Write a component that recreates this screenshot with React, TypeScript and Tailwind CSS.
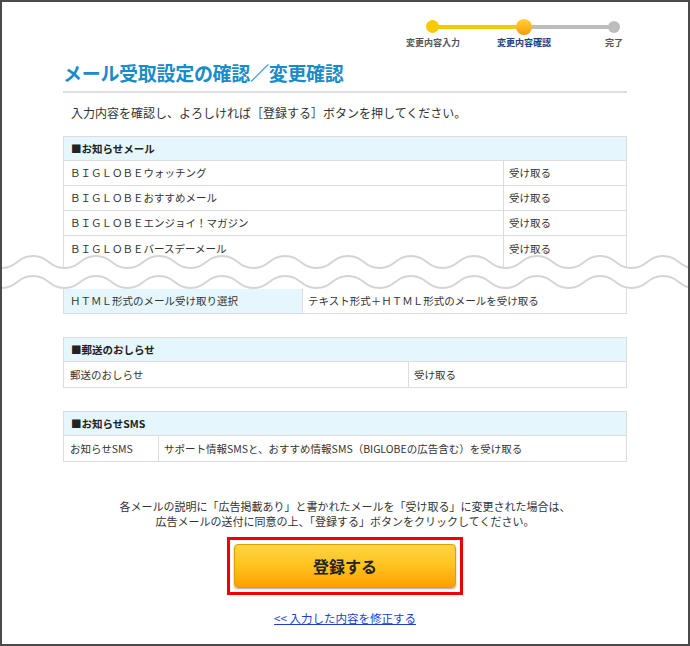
import React from "react";

const font = { fontFamily: '"Noto Sans CJK JP", "Noto Sans", sans-serif' };

function Steps() {
  return (
    <div className="relative ml-auto mr-[47px] h-[50px] w-[240px]">
      <div className="absolute left-[32px] top-[23px] h-[4px] w-[91px] bg-[#f7c900]" />
      <div className="absolute left-[123px] top-[23px] h-[4px] w-[91px] bg-[#bdbdbd]" />
      <div className="absolute left-[25px] top-[18px] h-[13px] w-[13px] rounded-full bg-[#f7c900]" />
      <div className="absolute left-[115px] top-[17px] h-[16px] w-[16px] rounded-full bg-gradient-to-b from-[#ffd23a] to-[#f59b00]" />
      <div className="absolute left-[207px] top-[19px] h-[12px] w-[12px] rounded-full bg-[#bdbdbd]" />
      <div className="absolute left-[2px] top-[34px] w-[60px] text-center text-[9px] font-bold leading-[14px] text-[#555]">変更内容入力</div>
      <div className="absolute left-[93px] top-[34px] w-[60px] text-center text-[9px] font-bold leading-[14px] text-[#1f3e7a]">変更内容確認</div>
      <div className="absolute left-[193px] top-[34px] w-[40px] text-center text-[9px] font-bold leading-[14px] text-[#555]">完了</div>
    </div>
  );
}

function Header({ children }: { children: React.ReactNode }) {
  return (
    <div className="flex h-[24px] items-center border-b border-[#dcdcdc] bg-[#e5f6fd] px-[7px] text-[10.5px] font-bold text-[#222]">
      {children}
    </div>
  );
}

function Row({ left, right, split, noBottom }: { left: string; right: string; split: number; noBottom?: boolean }) {
  return (
    <div className={`flex h-[25px] items-center text-[10.5px] text-[#333] ${noBottom ? "" : "border-b border-[#dcdcdc]"}`}>
      <div className="flex h-full items-center border-r border-[#dcdcdc] px-[6px]" style={{ width: split }}>
        {left}
      </div>
      <div className="flex h-full flex-1 items-center px-[5px]">{right}</div>
    </div>
  );
}

// two wavy cut lines between the mail table and the HTML row
function Waves() {
  const w = 690;
  const len = 63;
  const mk = (y: number) => {
    const x0 = -61.5;
    let d = `M ${x0} ${y}`;
    for (let x = x0; x < w + 40; x += len) {
      d += ` C ${x + len * 0.25} ${y}, ${x + len * 0.25} ${y - 12}, ${x + len / 2} ${y - 12} S ${x + len * 0.75} ${y}, ${x + len} ${y}`;
    }
    return d;
  };
  const top = mk(16);
  const bottom = mk(36);
  return (
    <svg width={w} height={37} className="-mx-[63px] block" viewBox={`0 0 ${w} 37`}>
      <path d={`${top} L ${w + 80} 40 L -70 40 Z`} fill="#fff" />
      <path d={top} fill="none" stroke="#d4d4d4" strokeWidth={2} />
      <path d={bottom} fill="none" stroke="#d4d4d4" strokeWidth={2} />
    </svg>
  );
}

export default function App() {
  return (
    <div style={font} className="h-[646px] w-[690px] overflow-hidden border-2 border-[#4a4a4a] bg-white">
      <Steps />
      <div className="px-[61px]">
        <h1 className="mt-[7px] text-[19px] font-bold leading-[28px] tracking-[-0.3px] text-[#1a8bc9]">
          メール受取設定の確認／変更確認
        </h1>
        <div className="mt-[4px] h-[2px] bg-[#dedede]" />
        <p className="mt-[12px] pl-[8px] text-[12px] leading-[16px] text-[#333]">
          入力内容を確認し、よろしければ［登録する］ボタンを押してください。
        </p>

        {/* お知らせメール */}
        <div className="mt-[15px] border-x border-t border-[#dcdcdc]">
          <Header>■お知らせメール</Header>
          <Row split={440} left="ＢＩＧＬＯＢＥウォッチング" right="受け取る" />
          <Row split={440} left="ＢＩＧＬＯＢＥおすすめメール" right="受け取る" />
          <Row split={440} left="ＢＩＧＬＯＢＥエンジョイ！マガジン" right="受け取る" />
          <Row split={440} left="ＢＩＧＬＯＢＥバースデーメール" right="受け取る" noBottom />
          <div className="flex h-[8px]">
            <div className="w-[440px] border-r border-[#dcdcdc]" />
          </div>
        </div>
        <div className="-mt-[17px]">
          <Waves />
        </div>

        {/* HTML */}
        <div className="flex h-[25px] border-x border-b border-[#dcdcdc] text-[10.5px] text-[#333]">
          <div className="flex w-[239px] items-center border-r border-[#dcdcdc] bg-[#e5f6fd] px-[6px]">ＨＴＭＬ形式のメール受け取り選択</div>
          <div className="flex flex-1 items-center px-[5px]">テキスト形式＋ＨＴＭＬ形式のメールを受け取る</div>
        </div>

        {/* 郵送 */}
        <div className="mt-[23px] border border-[#dcdcdc]">
          <Header>■郵送のおしらせ</Header>
          <Row split={345} left="郵送のおしらせ" right="受け取る" noBottom />
        </div>

        {/* SMS */}
        <div className="mt-[23px] border border-[#dcdcdc]">
          <Header>■お知らせSMS</Header>
          <Row split={95} left="お知らせSMS" right="サポート情報SMSと、おすすめ情報SMS（BIGLOBEの広告含む）を受け取る" noBottom />
        </div>

        <div className="mt-[37px] text-center text-[11px] leading-[15px] text-[#333]">
          <p>各メールの説明に「広告掲載あり」と書かれたメールを「受け取る」に変更された場合は、</p>
          <p>広告メールの送付に同意の上、「登録する」ボタンをクリックしてください。</p>
        </div>

        <div className="mt-[8px] flex justify-center">
          <div className="border-[3px] border-[#f00000] px-[4px] py-[4px]">
            <button className="flex h-[44px] w-[222px] items-center justify-center rounded-[4px] border border-[#e0a000] bg-gradient-to-b from-[#ffd440] via-[#ffc21c] to-[#ff9f00] text-[16px] font-bold text-[#222] shadow-[0_1px_2px_rgba(0,0,0,0.35)]">
              登録する
            </button>
          </div>
        </div>

        <div className="mt-[9px] text-center">
          <a className="text-[11.5px] leading-[16px] text-[#1a3fd0] underline">&lt;&lt; 入力した内容を修正する</a>
        </div>
      </div>
    </div>
  );
}
